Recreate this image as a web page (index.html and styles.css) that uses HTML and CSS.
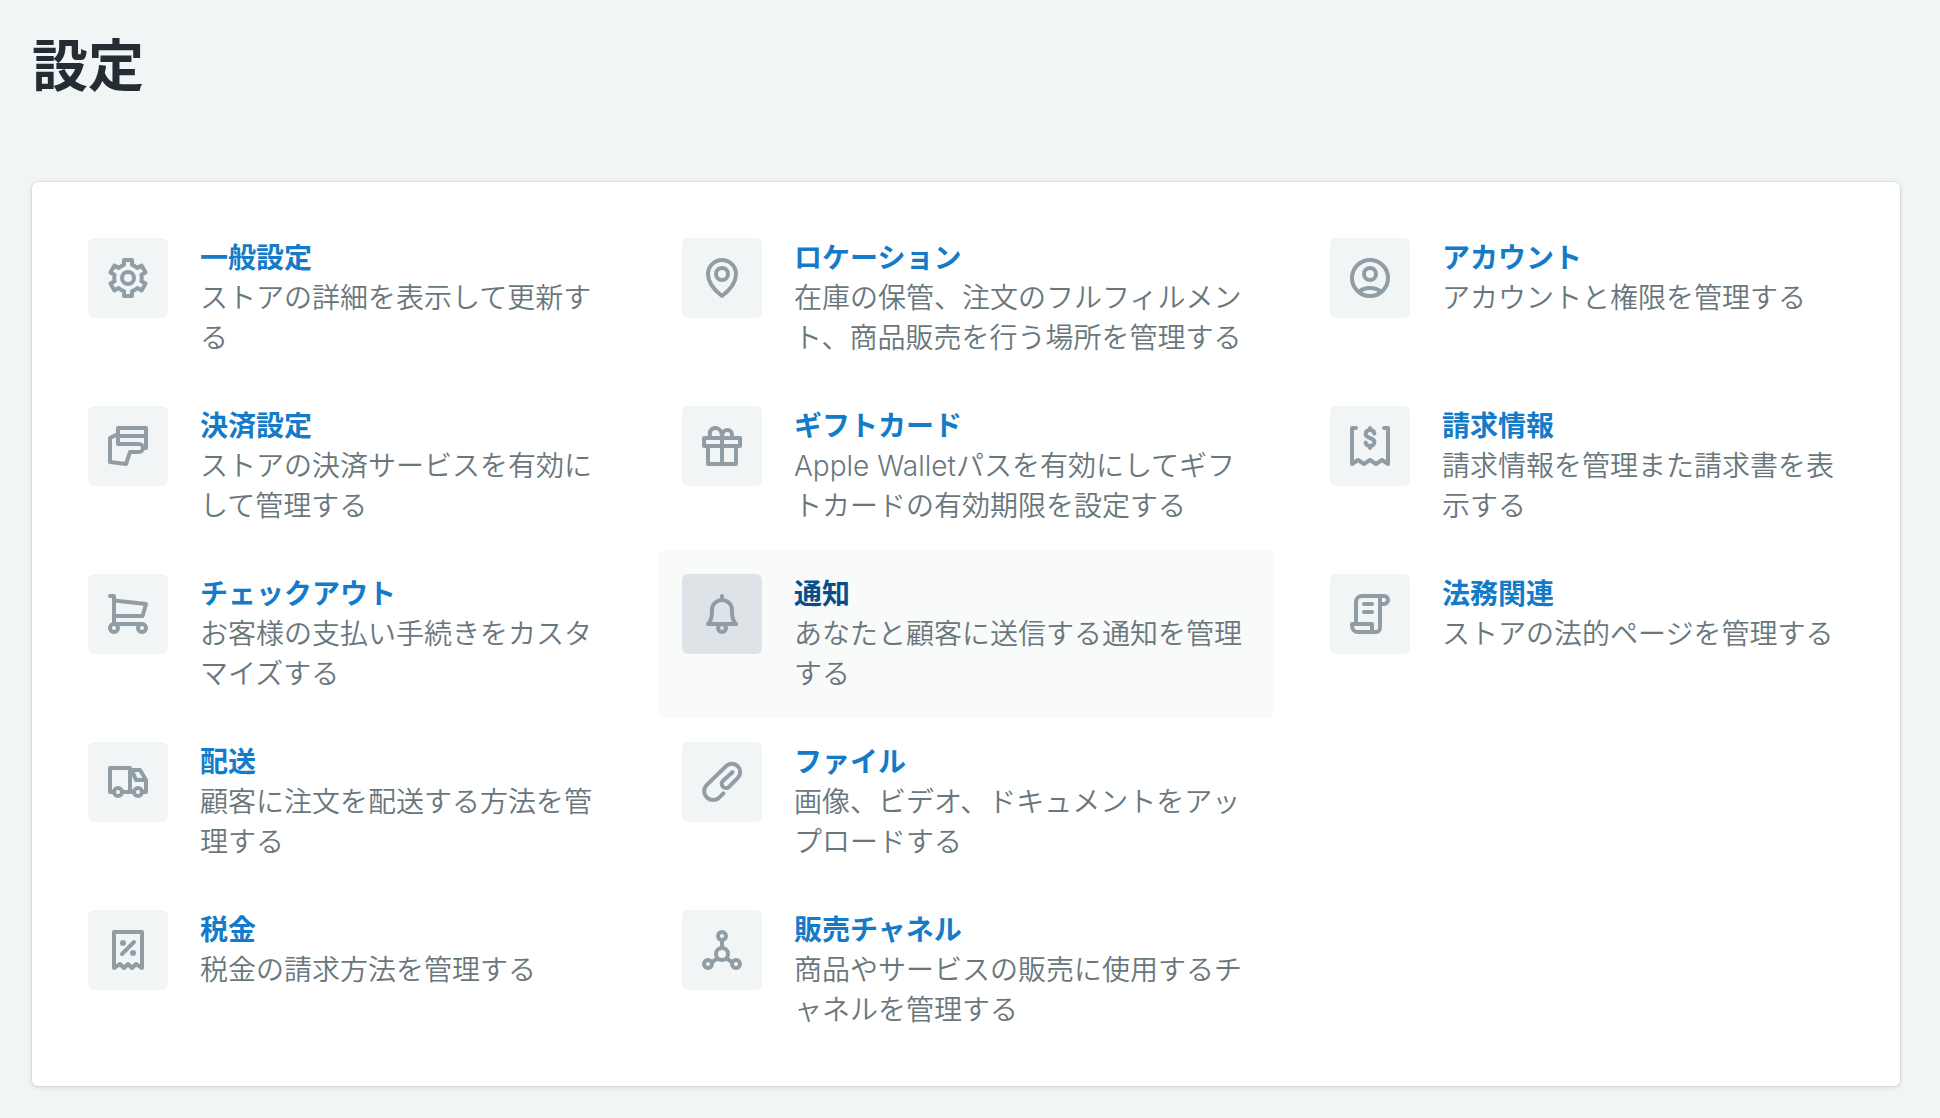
FILE: index.html
```html
<!DOCTYPE html>
<html lang="ja">
<head>
<meta charset="utf-8">
<meta name="viewport" content="width=device-width, initial-scale=1">
<title>設定</title>
<link rel="stylesheet" href="styles.css">
</head>
<body>
<main class="page">
  <h1 class="page-title">設定</h1>
  <nav class="card" aria-label="設定">
    <ul class="column">
      <li><a class="item" href="#general">
        <span class="tile"><svg class="icon" viewBox="0 0 20 20" aria-hidden="true"><path d="M8 1h4v2.400q1.500.5 2.700 1.600l2.100-1.200 2 3.400-2.100 1.200q.4 1.600 0 3.200l2.100 1.200-2 3.400-2.100-1.200q-1.200 1.100-2.700 1.600V19H8v-2.400q-1.500-.5-2.700-1.600l-2.100 1.200-2-3.400 2.100-1.200q-.4-1.600 0-3.200L1.200 7.200l2-3.400L5.300 5Q6.500 3.900 8 3.400z"/><circle cx="10" cy="10" r="3"/></svg></span>
        <span class="text"><span class="name">一般設定</span><span class="desc">ストアの詳細を表示して更新する</span></span>
      </a></li>
      <li><a class="item" href="#payments">
        <span class="tile"><svg class="icon" viewBox="0 0 20 20" aria-hidden="true"><path d="M17.500 11H19V1H5v8h10.500a2 2 0 010 4H11l-2 6-8-1V6l4-2M5 5h14"/></svg></span>
        <span class="text"><span class="name">決済設定</span><span class="desc">ストアの決済サービスを有効にして管理する</span></span>
      </a></li>
      <li><a class="item" href="#checkout">
        <span class="tile"><svg class="icon" viewBox="0 0 20 20" aria-hidden="true"><path d="M1 1h2v14h14M3 3.200L19 5l-1.700 6H3"/><circle cx="3" cy="17" r="2"/><circle cx="17" cy="17" r="2"/></svg></span>
        <span class="text"><span class="name">チェックアウト</span><span class="desc">お客様の支払い手続きをカスタマイズする</span></span>
      </a></li>
      <li><a class="item" href="#shipping">
        <span class="tile"><svg class="icon" viewBox="0 0 20 20" aria-hidden="true"><path d="M3 15H1V3h10v12H7M11 4h5l3 5v6h-2M13 15h-2M12.500 5.500L14 9h5"/><circle cx="5" cy="15" r="2"/><circle cx="15" cy="15" r="2"/></svg></span>
        <span class="text"><span class="name">配送</span><span class="desc">顧客に注文を配送する方法を管理する</span></span>
      </a></li>
      <li><a class="item" href="#taxes">
        <span class="tile"><svg class="icon" viewBox="0 0 20 20" aria-hidden="true"><path d="M3 19V1h14v18l-3-2-2 2-2-2-2 2-2-2zM7 12l6-6"/><circle class="dot" cx="7.500" cy="6.500" r="1.500"/><circle class="dot" cx="12.500" cy="11.500" r="1.500"/></svg></span>
        <span class="text"><span class="name">税金</span><span class="desc">税金の請求方法を管理する</span></span>
      </a></li>
    </ul>
    <ul class="column">
      <li><a class="item" href="#locations">
        <span class="tile"><svg class="icon" viewBox="0 0 20 20" aria-hidden="true"><path d="M10 19C8 17.500 3 13.500 3 8a7 7 0 0114 0c0 5.500-5 9.500-7 11z"/><circle cx="10" cy="8" r="3"/></svg></span>
        <span class="text"><span class="name">ロケーション</span><span class="desc">在庫の保管、注文のフルフィルメント、商品販売を行う場所を管理する</span></span>
      </a></li>
      <li><a class="item" href="#gift-cards">
        <span class="tile"><svg class="icon" viewBox="0 0 20 20" aria-hidden="true"><path d="M1 6h18v4H1zM3 10v9h14v-9M10 6v13M4.200 5.500C3.200 3 4.500 1 6.700 1S10 3 10 5.500C10 3.200 11 2 12.700 2s2.800 1.500 2.100 3.500"/></svg></span>
        <span class="text"><span class="name">ギフトカード</span><span class="desc">Apple Walletパスを有効にしてギフトカードの有効期限を設定する</span></span>
      </a></li>
      <li><a class="item item-active" href="#notifications">
        <span class="tile"><svg class="icon" viewBox="0 0 20 20" aria-hidden="true"><path d="M10 1v2M3 15c1.200-1.200 2-3 2-6V8a5 5 0 0110 0v1c0 3 .8 4.800 2 6z"/><circle cx="10" cy="17" r="2"/></svg></span>
        <span class="text"><span class="name">通知</span><span class="desc">あなたと顧客に送信する通知を管理する</span></span>
      </a></li>
      <li><a class="item" href="#files">
        <span class="tile"><svg class="icon" viewBox="0 0 20 20" aria-hidden="true"><path d="M10.700 15.700l-2 2a4.450 4.450 0 01-6.300-6.300L12 2.100a4.100 4.100 0 015.900 5.800l-4.400 4.500a2.100 2.100 0 01-3-3l4.700-4.300"/></svg></span>
        <span class="text"><span class="name">ファイル</span><span class="desc">画像、ビデオ、ドキュメントをアップロードする</span></span>
      </a></li>
      <li><a class="item" href="#channels">
        <span class="tile"><svg class="icon" viewBox="0 0 20 20" aria-hidden="true"><path d="M10 5v4M5 16l2.400-1.500M15 16l-2.400-1.500"/><circle cx="10" cy="12" r="3"/><circle cx="10" cy="3" r="2"/><circle cx="3" cy="17" r="2"/><circle cx="17" cy="17" r="2"/></svg></span>
        <span class="text"><span class="name">販売チャネル</span><span class="desc">商品やサービスの販売に使用するチャネルを管理する</span></span>
      </a></li>
    </ul>
    <ul class="column">
      <li><a class="item" href="#account">
        <span class="tile"><svg class="icon" viewBox="0 0 20 20" aria-hidden="true"><circle cx="10" cy="10" r="9"/><circle cx="10" cy="8" r="3"/><path d="M4.500 16.800c3-2.400 8-2.400 11 0"/></svg></span>
        <span class="text"><span class="name">アカウント</span><span class="desc">アカウントと権限を管理する</span></span>
      </a></li>
      <li><a class="item" href="#billing">
        <span class="tile"><svg class="icon" viewBox="0 0 20 20" aria-hidden="true"><path d="M3 1H1v18l3-2 3 2 3-2 3 2 3-2 3 2V1h-2M12.200 3.800C12 2.600 11 2 10 2 8.800 2 7.800 2.800 7.800 4c0 2.600 4.400 1.400 4.400 4 0 1.200-1 2-2.200 2s-2.100-.7-2.200-1.800M10 1v1M10 10v1"/></svg></span>
        <span class="text"><span class="name">請求情報</span><span class="desc">請求情報を管理また請求書を表示する</span></span>
      </a></li>
      <li><a class="item" href="#legal">
        <span class="tile"><svg class="icon" viewBox="0 0 20 20" aria-hidden="true"><path d="M3 15V4a3 3 0 013-3h11a2 2 0 010 4h-2M15 1v16a2 2 0 01-2 2H4a3 3 0 01-3-3v-1h10v3.500M7 5h4M7 9h4"/></svg></span>
        <span class="text"><span class="name">法務関連</span><span class="desc">ストアの法的ページを管理する</span></span>
      </a></li>
    </ul>
  </nav>
</main>
</body>
</html>
```
FILE: styles.css
```css
* {
  box-sizing: border-box;
}

body {
  margin: 0;
  background: #f1f5f6;
  color: #232d33;
  font-family: Inter, "Noto Sans CJK JP", sans-serif;
  font-size: 28px;
  line-height: 40px;
}

.page {
  padding: 34px 40px 32px 32px;
}

.page-title {
  margin: 0 0 84px;
  font-size: 56px;
  font-weight: 700;
  line-height: 64px;
}

.card {
  display: grid;
  grid-template-columns: 281fr 308fr 281fr;
  column-gap: 32px;
  padding: 32px;
  border-radius: 6px;
  background: #fff;
  box-shadow: 0 0 0 1px rgba(63, 63, 68, 0.05), 0 1px 5px rgba(63, 63, 68, 0.18);
}

.column {
  margin: 0;
  padding: 0;
  list-style: none;
}

.item {
  display: flex;
  align-items: flex-start;
  gap: 32px;
  min-height: 168px;
  padding: 24px;
  border-radius: 6px;
  color: #69777d;
  text-decoration: none;
}

.tile {
  display: flex;
  flex: none;
  align-items: center;
  justify-content: center;
  width: 80px;
  height: 80px;
  border-radius: 6px;
  background: #f1f5f6;
}

.icon {
  width: 40px;
  height: 40px;
  overflow: visible;
  fill: none;
  stroke: #919da5;
  stroke-width: 2;
  stroke-linecap: round;
  stroke-linejoin: round;
}

.dot {
  fill: #919da5;
  stroke: none;
}

.text {
  flex: 1;
  min-width: 0;
}

.name,
.desc {
  display: block;
}

.name {
  color: #147bc9;
  font-weight: 700;
}

.desc {
  font-weight: 350;
}

.item:hover,
.item-active {
  background: #f9fafa;
}

.item:hover .tile,
.item-active .tile {
  background: #dde3e7;
}

.item:hover .name,
.item-active .name {
  color: #084e8a;
}
```
